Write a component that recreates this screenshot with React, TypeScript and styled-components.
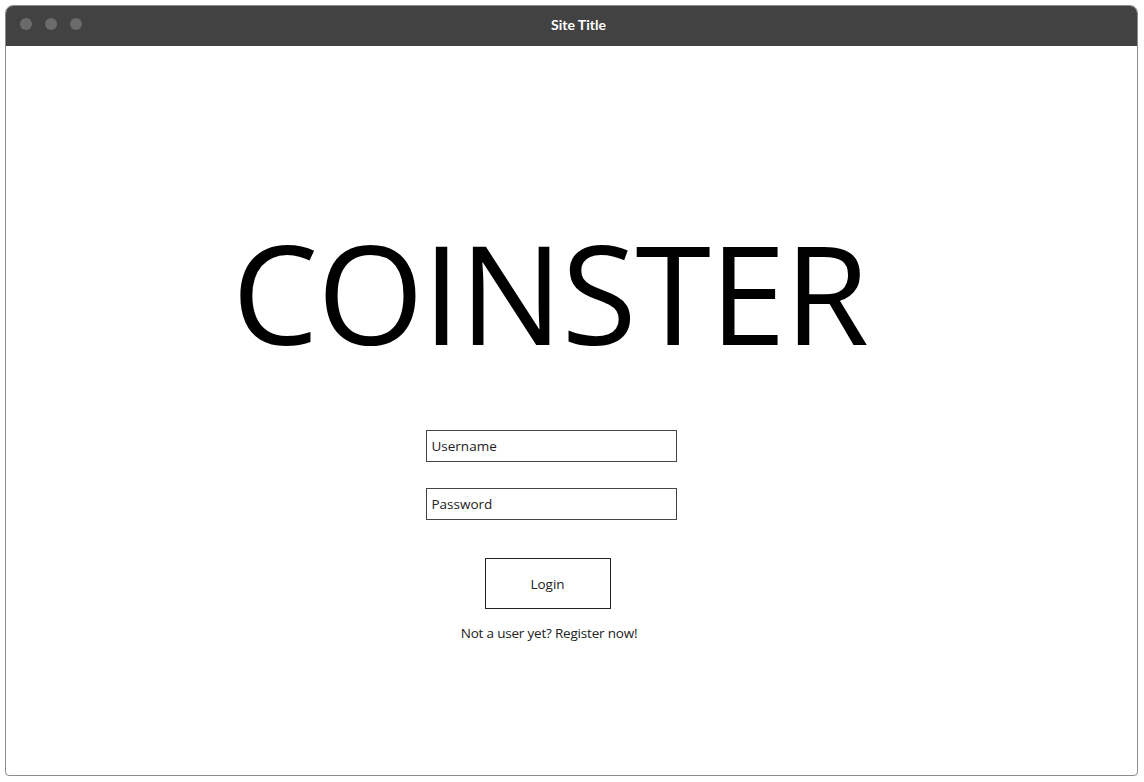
import React from "react";
import styled, { createGlobalStyle } from "styled-components";

const Global = createGlobalStyle`
  html, body { margin: 0; padding: 0; background: #ffffff; }
  body { font-family: "Open Sans", "Noto Sans", sans-serif; }
  * { box-sizing: border-box; }
`;

const Page = styled.div`
  width: 1144px;
  height: 782px;
  padding: 5px 6px 6px 5px;
`;

const Window = styled.div`
  width: 1133px;
  height: 771px;
  border: 1.5px solid #8c8c8c;
  border-radius: 8px 8px 4px 4px;
  overflow: hidden;
  display: flex;
  flex-direction: column;
  background: #fff;
`;

const TitleBar = styled.div`
  position: relative;
  height: 40px;
  flex: none;
  background: #424242;
  display: flex;
  align-items: center;
  justify-content: center;
  padding-left: 14px;
  padding-bottom: 4px;
`;

const Dots = styled.div`
  position: absolute;
  left: 14px;
  top: 12px;
  display: flex;
  gap: 13px;
`;

const Dot = styled.span`
  width: 12px;
  height: 12px;
  border-radius: 50%;
  background: #6b6b6b;
`;

const Title = styled.div`
  color: #ffffff;
  font-family: Lato, "Open Sans", sans-serif;
  font-weight: 700;
  font-size: 14px;
`;

const Content = styled.div`
  flex: 1;
  display: flex;
  flex-direction: column;
  align-items: center;
  padding-right: 41px;
  padding-top: 178px;
`;

const Logo = styled.h1`
  margin: 0 0 0 -2px;
  font-family: "Open Sans", sans-serif;
  font-weight: 400;
  font-size: 137px;
  line-height: 1;
  letter-spacing: -1.2px;
  color: #000;
`;

const Form = styled.div`
  margin-top: 69px;
  display: flex;
  flex-direction: column;
  align-items: center;
`;

const Field = styled.div<{ $gap?: number }>`
  width: 251px;
  height: 32px;
  border: 1.5px solid #444;
  display: flex;
  align-items: center;
  padding-left: 5px;
  font-size: 13.5px;
  color: #222;
  margin-top: ${(p) => p.$gap ?? 0}px;
`;

const Button = styled.div`
  margin-top: 38px;
  margin-right: 7px;
  width: 126px;
  height: 51px;
  border: 1.5px solid #222;
  display: flex;
  align-items: center;
  justify-content: center;
  font-size: 13.5px;
  color: #222;
`;

const Note = styled.div`
  margin-top: 15px;
  margin-right: 4px;
  font-size: 13.5px;
  letter-spacing: -0.2px;
  color: #222;
`;

export default function App() {
  return (
    <>
      <Global />
      <Page>
        <Window>
          <TitleBar>
            <Dots>
              <Dot />
              <Dot />
              <Dot />
            </Dots>
            <Title>Site Title</Title>
          </TitleBar>
          <Content>
            <Logo>COINSTER</Logo>
            <Form>
              <Field>Username</Field>
              <Field $gap={26}>Password</Field>
              <Button>Login</Button>
              <Note>Not a user yet? Register now!</Note>
            </Form>
          </Content>
        </Window>
      </Page>
    </>
  );
}
